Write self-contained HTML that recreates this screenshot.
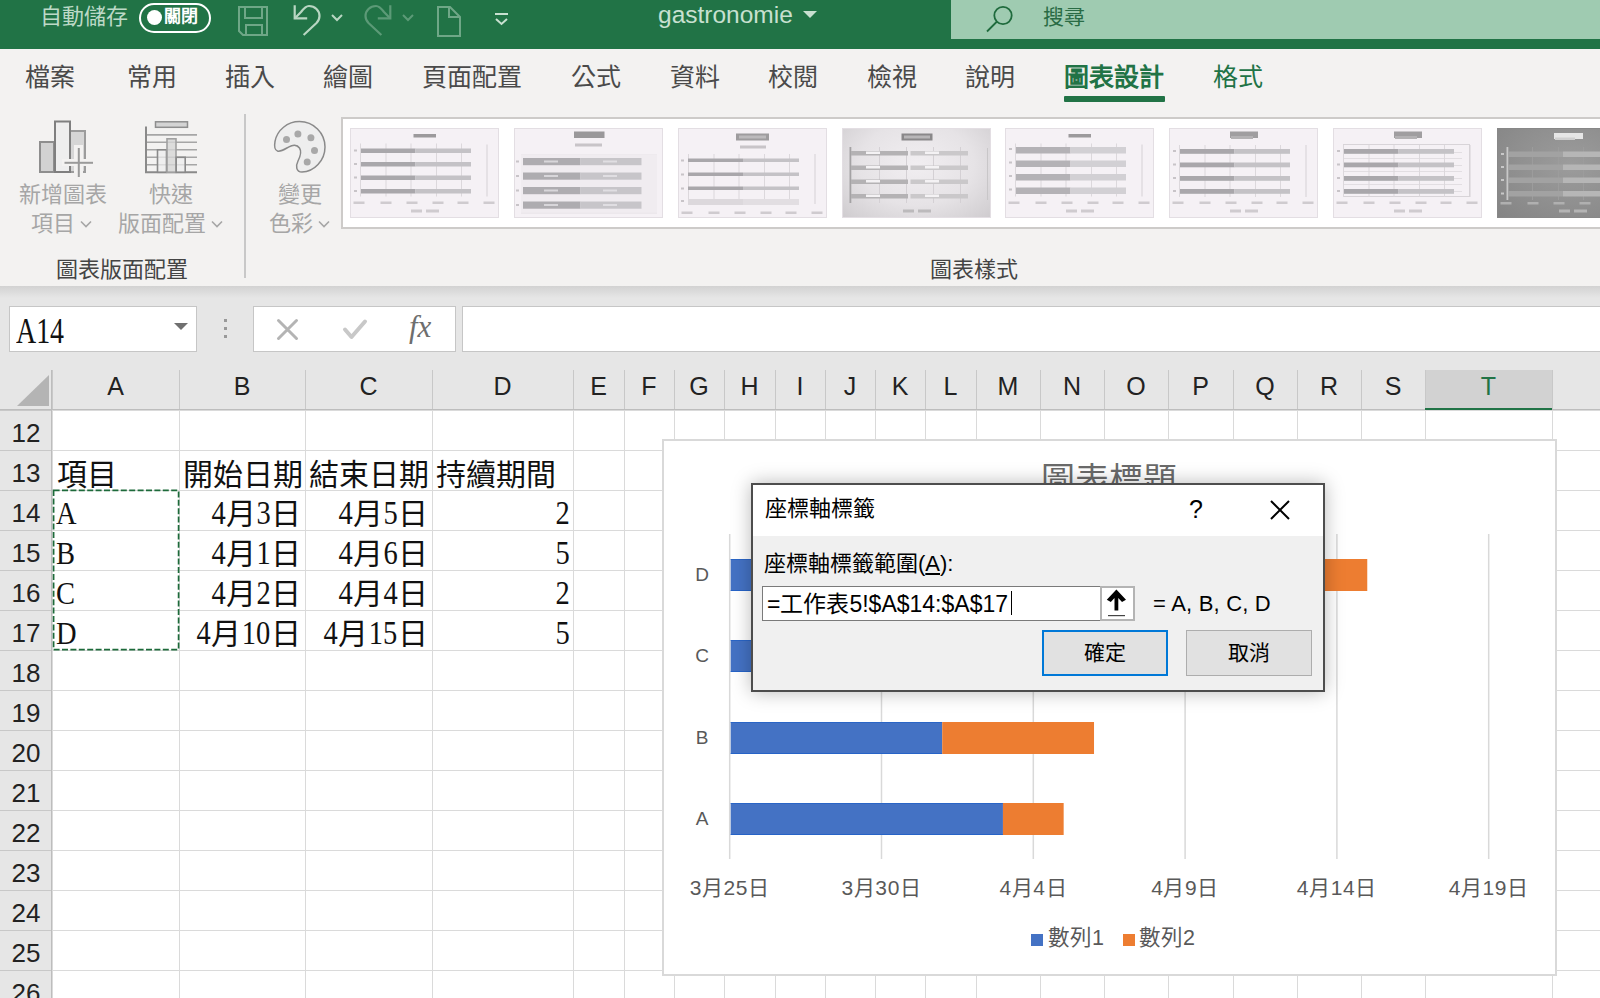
<!DOCTYPE html>
<html lang="zh-TW">
<head>
<meta charset="utf-8">
<style>
*{box-sizing:border-box;margin:0;padding:0}
html,body{width:1600px;height:998px;overflow:hidden;background:#fff;font-family:"Liberation Sans",sans-serif}
.a{position:absolute;white-space:nowrap}
#title{position:absolute;left:0;top:0;width:1600px;height:49px;background:#217346}
#search{position:absolute;left:951px;top:0;width:649px;height:39px;background:#9fcbb1}
#ribbon{position:absolute;left:0;top:49px;width:1600px;height:237px;background:#f3f2f1}
#shadow{position:absolute;left:0;top:286px;width:1600px;height:12px;background:linear-gradient(#d2d2d2,#e6e6e6)}
#fbar{position:absolute;left:0;top:286px;width:1600px;height:124px;background:#e6e6e6}
.tab{position:absolute;top:62px;font-size:25px;color:#4a4a4a;line-height:30px}
.rl{position:absolute;font-size:22px;color:#a6a6a6;line-height:28px;text-align:center}
.thumb{position:absolute;top:128px;width:149px;height:90px;background:#f5f1f5;border:1px solid #ddd7dd;overflow:hidden}
.ch{position:absolute;top:366px;height:40px;font-size:25px;line-height:40px;text-align:center;color:#222}
.rh{position:absolute;left:0;width:52px;height:40px;font-size:26px;line-height:40px;text-align:center;color:#222}
.cell{position:absolute;height:40px;font-family:"Liberation Serif",serif;font-size:30px;line-height:40px;color:#111}
.dg{display:inline-block;transform:scale(0.95,1.14);transform-origin:50% 75%}
.lt{display:inline-block;transform:scale(0.95,1.04);transform-origin:0 75%}
.r{text-align:right}
</style>
</head>
<body>
<div id="title"></div>
<div id="search"></div>
<div id="ribbon"></div>
<div id="fbar"></div>
<div id="shadow"></div>

<div class="a" style="left:40px;top:2px;font-size:22px;line-height:30px;color:#bcd9c6">自動儲存</div>
<div class="a" style="left:139px;top:3px;width:72px;height:30px;border:2px solid #fff;border-radius:15px"></div>
<div class="a" style="left:147px;top:10px;width:15px;height:15px;border-radius:50%;background:#fff"></div>
<div class="a" style="left:164px;top:5px;font-size:17px;line-height:24px;color:#fff;font-weight:bold">關閉</div>
<svg class="a" style="left:0;top:0" width="951" height="49" viewBox="0 0 951 49">
<g fill="none" stroke="#6fa787" stroke-width="2">
<path d="M239 7 H267 V35 H243 L239 31 Z"/>
<path d="M245 7 V18 H262 V7"/>
<path d="M246 35 V25 H262 V35"/>
</g>
<g fill="none" stroke="#b8d6c2" stroke-width="2.2">
<path d="M294.7 5.3 V18.4 H307.2"/>
<path d="M294.7 18.4 L301 12 C304 8 306 6 309 6 C315 6 319.5 10.5 319.5 16 C319.5 19 318.5 21 316.5 23 L303.6 35"/>
<path d="M332 15 L337 20 L342 15" stroke-width="2"/>
</g>
<g fill="none" stroke="#5c9a77" stroke-width="2.2">
<path d="M390.3 5.3 V18.4 H377.8"/>
<path d="M390.3 18.4 L384 12 C381 8 379 6 376 6 C370 6 365.5 10.5 365.5 16 C365.5 19 366.5 21 368.5 23 L381.4 35"/>
<path d="M403 15 L408 20 L413 15" stroke-width="2"/>
</g>
<g fill="none" stroke="#6fa787" stroke-width="2">
<path d="M438 7 H450 L460 17 V36 H438 Z"/>
<path d="M449 7 V17 H460"/>
</g>
<g fill="none" stroke="#c8e0d0" stroke-width="2">
<path d="M495 14 H508"/>
<path d="M496 19 L501.5 24 L507 19"/>
</g>
</svg>
<div class="a" style="left:658px;top:0px;font-size:24.5px;line-height:30px;color:#c8e0d0">gastronomie</div>
<svg class="a" style="left:803px;top:11px" width="14" height="8"><path d="M0 0 H14 L7 7 Z" fill="#c8e0d0"/></svg>
<svg class="a" style="left:984px;top:3px" width="32" height="32"><g fill="none" stroke="#1f6b3d" stroke-width="1.8"><circle cx="19" cy="12.5" r="8.7"/><path d="M13 18.5 L3 28.5"/></g></svg>
<div class="a" style="left:1043px;top:3px;font-size:21px;line-height:28px;color:#2a6b45">搜尋</div>
<div class="tab" style="left:25px">檔案</div>
<div class="tab" style="left:127px">常用</div>
<div class="tab" style="left:225px">插入</div>
<div class="tab" style="left:323px">繪圖</div>
<div class="tab" style="left:422px">頁面配置</div>
<div class="tab" style="left:571px">公式</div>
<div class="tab" style="left:670px">資料</div>
<div class="tab" style="left:768px">校閱</div>
<div class="tab" style="left:867px">檢視</div>
<div class="tab" style="left:965px">說明</div>
<div class="tab" style="left:1064px;color:#217346;font-weight:bold">圖表設計</div>
<div class="a" style="left:1064px;top:96px;width:101px;height:6px;background:#217346;border-radius:1px"></div>
<div class="tab" style="left:1213px;color:#217346">格式</div>
<svg class="a" style="left:0;top:110px" width="340" height="176" viewBox="0 110 340 176">
<rect x="40" y="142" width="14" height="30" fill="#d2d2d2" stroke="#8e8e8e" stroke-width="2"/>
<rect x="70" y="131" width="15" height="41" fill="#d6d6d6" stroke="#9c9c9c" stroke-width="2"/>
<rect x="55" y="121.5" width="15" height="50.5" fill="#eeeeee" stroke="#7f7f7f" stroke-width="2"/>
<rect x="62" y="159" width="32" height="7" fill="#f3f2f1"/>
<rect x="74" y="145" width="9" height="33" fill="#f3f2f1"/>
<g stroke="#9a9a9a" stroke-width="2">
<path d="M64.5 162.8 H93"/><path d="M78.8 148 V177"/>
</g>
<rect x="155.5" y="121.8" width="32" height="5.5" fill="#d4d4d4" stroke="#8e8e8e" stroke-width="1.5"/>
<g stroke="#a6a6a6" stroke-width="1.6" fill="none">
<path d="M147 134.9 H197 M147 142.3 H197 M147 149.8 H197 M147 157.3 H197 M147 164.8 H197"/>
</g>
<path d="M146 126.5 V172.3 H197" stroke="#8a8a8a" stroke-width="2" fill="none"/>
<rect x="157.5" y="149.8" width="9" height="22.5" fill="#eeeeee" fill-opacity="0.75" stroke="#8a8a8a" stroke-width="1.6"/>
<rect x="167" y="138.8" width="9" height="33.5" fill="#d6d6d6" fill-opacity="0.8" stroke="#a0a0a0" stroke-width="1.6"/>
<rect x="176.2" y="157.3" width="9" height="15" fill="#eeeeee" fill-opacity="0.75" stroke="#8a8a8a" stroke-width="1.6"/>
<path d="M299.5 121.6 C313.5 121.6 325 133 325 147 C325 160.5 314 172 302 172 C296 172 295.5 166 298 161 C300.5 156 301.5 151 299.5 148 C297 144.5 292.5 144.8 289 146.8 C285 149 281 152 277.5 151 C274.5 150 274.2 146 275 141.5 C277 130 287.5 121.6 299.5 121.6 Z" fill="#eeeeee" stroke="#8a8a8a" stroke-width="1.5"/>
<g fill="#a8a8a8">
<circle cx="286.5" cy="139.4" r="3.5"/><circle cx="297.9" cy="133.9" r="3.5"/><circle cx="310.9" cy="137.8" r="3.5"/><circle cx="314.5" cy="150.5" r="3.5"/><circle cx="307.2" cy="161.9" r="3.5"/>
</g>
<rect x="244" y="114" width="2" height="164" fill="#c8c8c8"/>
</svg>
<div class="rl" style="left:13px;top:181px;width:100px">新增圖表</div>
<div class="rl" style="left:11px;top:210px;width:100px">項目<svg width="12" height="8" style="vertical-align:3px;margin-left:5px"><path d="M1 1.5 L6 6.5 L11 1.5" fill="none" stroke="#a6a6a6" stroke-width="1.6"/></svg></div>
<div class="rl" style="left:121px;top:181px;width:100px">快速</div>
<div class="rl" style="left:113px;top:210px;width:115px">版面配置<svg width="12" height="8" style="vertical-align:3px;margin-left:5px"><path d="M1 1.5 L6 6.5 L11 1.5" fill="none" stroke="#a6a6a6" stroke-width="1.6"/></svg></div>
<div class="rl" style="left:250px;top:181px;width:100px">變更</div>
<div class="rl" style="left:249px;top:210px;width:100px">色彩<svg width="12" height="8" style="vertical-align:3px;margin-left:5px"><path d="M1 1.5 L6 6.5 L11 1.5" fill="none" stroke="#a6a6a6" stroke-width="1.6"/></svg></div>
<div class="a" style="left:56px;top:257px;font-size:22px;line-height:26px;color:#444">圖表版面配置</div>
<div class="a" style="left:930px;top:257px;font-size:22px;line-height:26px;color:#444">圖表樣式</div>
<div class="a" style="left:341px;top:117px;width:1270px;height:112px;background:#fff;border:2px solid #cdcbc9"></div>
<div class="thumb" style="left:350px;background:#f5f1f5;border-color:#e3dee3"><svg width="149" height="90" viewBox="0 0 149 90" style="position:absolute;left:-1px;top:-1px"><rect x="63.5" y="6" width="22.5" height="3.5" fill="#9c9a9c"/><rect x="10" y="15.5" width="1" height="53" fill="#dcd8dc"/><rect x="35.5" y="15.5" width="1" height="53" fill="#dcd8dc"/><rect x="60.5" y="15.5" width="1" height="53" fill="#dcd8dc"/><rect x="86" y="15.5" width="1" height="53" fill="#dcd8dc"/><rect x="111" y="15.5" width="1" height="53" fill="#dcd8dc"/><rect x="136.5" y="16.5" width="1" height="52" fill="#d6d2d6"/><rect x="11" y="20.5" width="54.5" height="4.5" fill="#a9a7ab"/><rect x="65.5" y="20.5" width="55.5" height="4.5" fill="#c4c2c6"/><rect x="4" y="21.5" width="3" height="2" fill="#c8c4c8"/><rect x="11" y="34" width="54.5" height="4.5" fill="#a9a7ab"/><rect x="65.5" y="34" width="55.5" height="4.5" fill="#c4c2c6"/><rect x="4" y="35" width="3" height="2" fill="#c8c4c8"/><rect x="11" y="47.5" width="54.5" height="4.5" fill="#a9a7ab"/><rect x="65.5" y="47.5" width="55.5" height="4.5" fill="#c4c2c6"/><rect x="4" y="48.5" width="3" height="2" fill="#c8c4c8"/><rect x="11" y="61" width="54.5" height="4.5" fill="#a9a7ab"/><rect x="65.5" y="61" width="55.5" height="4.5" fill="#c4c2c6"/><rect x="4" y="62" width="3" height="2" fill="#c8c4c8"/><rect x="3.5" y="73.5" width="11" height="2.5" fill="#cfcbcf"/><rect x="30.5" y="73.5" width="11" height="2.5" fill="#cfcbcf"/><rect x="56.5" y="73.5" width="11" height="2.5" fill="#cfcbcf"/><rect x="82.5" y="73.5" width="11" height="2.5" fill="#cfcbcf"/><rect x="107.5" y="73.5" width="11" height="2.5" fill="#cfcbcf"/><rect x="133.5" y="73.5" width="11" height="2.5" fill="#cfcbcf"/><rect x="61" y="81.5" width="11" height="3" fill="#cfcbcf"/><rect x="76" y="81.5" width="13" height="3" fill="#cfcbcf"/></svg></div>
<div class="thumb" style="left:514px;background:#f5f1f5;border-color:#e3dee3"><svg width="149" height="90" viewBox="0 0 149 90" style="position:absolute;left:-1px;top:-1px"><rect x="60" y="3.5" width="30.5" height="6.5" fill="#9a989a"/><rect x="61" y="15.5" width="27" height="3" fill="#c8c4c8"/><rect x="7" y="26.5" width="136" height="1" fill="#e4e0e4"/><rect x="7" y="40.5" width="136" height="1" fill="#e4e0e4"/><rect x="7" y="55" width="136" height="1" fill="#e4e0e4"/><rect x="7" y="70" width="136" height="1" fill="#e4e0e4"/><rect x="7" y="84.5" width="136" height="1" fill="#e4e0e4"/><rect x="7" y="26.5" width="136" height="58" fill="#f0ecf0"/><rect x="9" y="30" width="57.5" height="7.2" fill="#aeacb0"/><rect x="66.5" y="30" width="61" height="7.2" fill="#c7c5c9"/><rect x="30" y="32.5" width="14" height="2" fill="#d8d6da"/><rect x="89" y="32.5" width="14" height="2" fill="#e0dee2"/><rect x="2" y="32.5" width="3" height="2" fill="#c8c4c8"/><rect x="9" y="44.5" width="57.5" height="7.2" fill="#aeacb0"/><rect x="66.5" y="44.5" width="61" height="7.2" fill="#c7c5c9"/><rect x="30" y="47.0" width="14" height="2" fill="#d8d6da"/><rect x="89" y="47.0" width="14" height="2" fill="#e0dee2"/><rect x="2" y="47.0" width="3" height="2" fill="#c8c4c8"/><rect x="9" y="59" width="57.5" height="7.2" fill="#aeacb0"/><rect x="66.5" y="59" width="61" height="7.2" fill="#c7c5c9"/><rect x="30" y="61.5" width="14" height="2" fill="#d8d6da"/><rect x="89" y="61.5" width="14" height="2" fill="#e0dee2"/><rect x="2" y="61.5" width="3" height="2" fill="#c8c4c8"/><rect x="9" y="73.5" width="57.5" height="7.2" fill="#aeacb0"/><rect x="66.5" y="73.5" width="61" height="7.2" fill="#c7c5c9"/><rect x="30" y="76.0" width="14" height="2" fill="#d8d6da"/><rect x="89" y="76.0" width="14" height="2" fill="#e0dee2"/><rect x="2" y="76.0" width="3" height="2" fill="#c8c4c8"/></svg></div>
<div class="thumb" style="left:678px;background:#f5f1f5;border-color:#e3dee3"><svg width="149" height="90" viewBox="0 0 149 90" style="position:absolute;left:-1px;top:-1px"><rect x="58" y="5.5" width="33" height="7" fill="#9e9c9e"/><rect x="61" y="7.5" width="27" height="3" fill="#bcbabc"/><rect x="62" y="17.5" width="26" height="3" fill="#c8c4c8"/><rect x="10" y="26" width="1" height="50" fill="#dcd8dc"/><rect x="35.5" y="26" width="1" height="50" fill="#dcd8dc"/><rect x="60.5" y="26" width="1" height="50" fill="#dcd8dc"/><rect x="86" y="26" width="1" height="50" fill="#dcd8dc"/><rect x="111" y="26" width="1" height="50" fill="#dcd8dc"/><rect x="136.5" y="26" width="1" height="50" fill="#d6d2d6"/><rect x="10" y="30.5" width="55" height="3.5" fill="#a9a7ab"/><rect x="65" y="30.5" width="56" height="3.5" fill="#c4c2c6"/><rect x="3" y="31.5" width="3" height="2" fill="#c8c4c8"/><rect x="10" y="44.5" width="55" height="3.5" fill="#a9a7ab"/><rect x="65" y="44.5" width="56" height="3.5" fill="#c4c2c6"/><rect x="3" y="45.5" width="3" height="2" fill="#c8c4c8"/><rect x="10" y="58.5" width="55" height="3.5" fill="#a9a7ab"/><rect x="65" y="58.5" width="56" height="3.5" fill="#c4c2c6"/><rect x="3" y="59.5" width="3" height="2" fill="#c8c4c8"/><rect x="10" y="71" width="55" height="6" fill="#dcd8dc"/><rect x="65" y="71" width="56" height="6" fill="#e2dee2"/><rect x="3" y="72" width="3" height="2" fill="#c8c4c8"/><rect x="3.5" y="83.5" width="11" height="2.5" fill="#cfcbcf"/><rect x="30.5" y="83.5" width="11" height="2.5" fill="#cfcbcf"/><rect x="56.5" y="83.5" width="11" height="2.5" fill="#cfcbcf"/><rect x="82.5" y="83.5" width="11" height="2.5" fill="#cfcbcf"/><rect x="107.5" y="83.5" width="11" height="2.5" fill="#cfcbcf"/><rect x="133.5" y="83.5" width="11" height="2.5" fill="#cfcbcf"/></svg></div>
<div class="thumb" style="left:842px;background:radial-gradient(ellipse at 50% 40%,#f1eef1 0%,#e6e3e6 55%,#cfcccf 100%);border-color:#e3dee3"><svg width="149" height="90" viewBox="0 0 149 90" style="position:absolute;left:-1px;top:-1px"><rect x="59.5" y="5.5" width="31" height="7" fill="#8a888a"/><rect x="62" y="7.5" width="26" height="3" fill="#b8b6b8"/><rect x="7.5" y="19" width="1.8" height="56" fill="#a4a2a4"/><rect x="37" y="19" width="1" height="56" fill="#d4d0d4"/><rect x="64" y="19" width="1" height="56" fill="#d4d0d4"/><rect x="91" y="19" width="1" height="56" fill="#d4d0d4"/><rect x="118" y="19" width="1" height="56" fill="#d4d0d4"/><rect x="145" y="20" width="1" height="52" fill="#c8c6c8"/><rect x="9" y="23" width="57" height="4.5" fill="#b4b2b4"/><rect x="68.5" y="23" width="57.5" height="4.5" fill="#cac8ca"/><rect x="24" y="23.5" width="14" height="2.5" fill="#f4f2f4"/><rect x="83" y="23.5" width="14" height="2.5" fill="#f4f2f4"/><rect x="9" y="37.5" width="57" height="4.5" fill="#b4b2b4"/><rect x="68.5" y="37.5" width="57.5" height="4.5" fill="#cac8ca"/><rect x="24" y="38.0" width="14" height="2.5" fill="#f4f2f4"/><rect x="83" y="38.0" width="14" height="2.5" fill="#f4f2f4"/><rect x="9" y="51.5" width="57" height="4.5" fill="#b4b2b4"/><rect x="68.5" y="51.5" width="57.5" height="4.5" fill="#cac8ca"/><rect x="24" y="52.0" width="14" height="2.5" fill="#f4f2f4"/><rect x="83" y="52.0" width="14" height="2.5" fill="#f4f2f4"/><rect x="9" y="66" width="57" height="4.5" fill="#b4b2b4"/><rect x="68.5" y="66" width="57.5" height="4.5" fill="#cac8ca"/><rect x="24" y="66.5" width="14" height="2.5" fill="#f4f2f4"/><rect x="83" y="66.5" width="14" height="2.5" fill="#f4f2f4"/><rect x="61" y="81.5" width="11" height="3" fill="#bcbabc"/><rect x="76" y="81.5" width="13" height="3" fill="#bcbabc"/></svg></div>
<div class="thumb" style="left:1005px;background:#f5f1f5;border-color:#e3dee3"><svg width="149" height="90" viewBox="0 0 149 90" style="position:absolute;left:-1px;top:-1px"><rect x="63.5" y="6" width="22.5" height="3.5" fill="#9c9a9c"/><rect x="10" y="15.5" width="1" height="53" fill="#dcd8dc"/><rect x="35.5" y="15.5" width="1" height="53" fill="#dcd8dc"/><rect x="60.5" y="15.5" width="1" height="53" fill="#dcd8dc"/><rect x="86" y="15.5" width="1" height="53" fill="#dcd8dc"/><rect x="111" y="15.5" width="1" height="53" fill="#dcd8dc"/><rect x="136.5" y="16.5" width="1" height="52" fill="#d6d2d6"/><rect x="11" y="19" width="54.5" height="6.5" fill="#b4b2b6"/><rect x="65.5" y="19" width="55.5" height="6.5" fill="#d2d0d4"/><rect x="4" y="20" width="3" height="2" fill="#c8c4c8"/><rect x="11" y="32.5" width="54.5" height="6.5" fill="#b4b2b6"/><rect x="65.5" y="32.5" width="55.5" height="6.5" fill="#d2d0d4"/><rect x="4" y="33.5" width="3" height="2" fill="#c8c4c8"/><rect x="11" y="46" width="54.5" height="6.5" fill="#b4b2b6"/><rect x="65.5" y="46" width="55.5" height="6.5" fill="#d2d0d4"/><rect x="4" y="47" width="3" height="2" fill="#c8c4c8"/><rect x="11" y="59.5" width="54.5" height="6.5" fill="#b4b2b6"/><rect x="65.5" y="59.5" width="55.5" height="6.5" fill="#d2d0d4"/><rect x="4" y="60.5" width="3" height="2" fill="#c8c4c8"/><rect x="3.5" y="73.5" width="11" height="2.5" fill="#cfcbcf"/><rect x="30.5" y="73.5" width="11" height="2.5" fill="#cfcbcf"/><rect x="56.5" y="73.5" width="11" height="2.5" fill="#cfcbcf"/><rect x="82.5" y="73.5" width="11" height="2.5" fill="#cfcbcf"/><rect x="107.5" y="73.5" width="11" height="2.5" fill="#cfcbcf"/><rect x="133.5" y="73.5" width="11" height="2.5" fill="#cfcbcf"/><rect x="61" y="81.5" width="11" height="3" fill="#cfcbcf"/><rect x="76" y="81.5" width="13" height="3" fill="#cfcbcf"/></svg></div>
<div class="thumb" style="left:1169px;background:#f5f1f5;border-color:#e3dee3"><svg width="149" height="90" viewBox="0 0 149 90" style="position:absolute;left:-1px;top:-1px"><rect x="61" y="3.5" width="28" height="6.5" fill="#a09ea0"/><rect x="62" y="8" width="22" height="3" fill="#b4b2b4"/><rect x="10" y="17" width="1" height="52" fill="#dcd8dc"/><rect x="35.5" y="17" width="1" height="52" fill="#dcd8dc"/><rect x="60.5" y="17" width="1" height="52" fill="#dcd8dc"/><rect x="86" y="17" width="1" height="52" fill="#dcd8dc"/><rect x="111" y="17" width="1" height="52" fill="#dcd8dc"/><rect x="136.5" y="17" width="1" height="52" fill="#d6d2d6"/><rect x="11" y="21" width="54.5" height="4.8" fill="#a9a7ab"/><rect x="65.5" y="21" width="55.5" height="4.8" fill="#c4c2c6"/><rect x="4" y="22" width="3" height="2" fill="#c8c4c8"/><rect x="11" y="34.5" width="54.5" height="4.8" fill="#a9a7ab"/><rect x="65.5" y="34.5" width="55.5" height="4.8" fill="#c4c2c6"/><rect x="4" y="35.5" width="3" height="2" fill="#c8c4c8"/><rect x="11" y="48" width="54.5" height="4.8" fill="#a9a7ab"/><rect x="65.5" y="48" width="55.5" height="4.8" fill="#c4c2c6"/><rect x="4" y="49" width="3" height="2" fill="#c8c4c8"/><rect x="11" y="61" width="54.5" height="4.8" fill="#a9a7ab"/><rect x="65.5" y="61" width="55.5" height="4.8" fill="#c4c2c6"/><rect x="4" y="62" width="3" height="2" fill="#c8c4c8"/><rect x="3.5" y="73.5" width="11" height="2.5" fill="#cfcbcf"/><rect x="30.5" y="73.5" width="11" height="2.5" fill="#cfcbcf"/><rect x="56.5" y="73.5" width="11" height="2.5" fill="#cfcbcf"/><rect x="82.5" y="73.5" width="11" height="2.5" fill="#cfcbcf"/><rect x="107.5" y="73.5" width="11" height="2.5" fill="#cfcbcf"/><rect x="133.5" y="73.5" width="11" height="2.5" fill="#cfcbcf"/><rect x="61" y="81.5" width="11" height="3" fill="#cfcbcf"/><rect x="76" y="81.5" width="13" height="3" fill="#cfcbcf"/></svg></div>
<div class="thumb" style="left:1333px;background:#f5f1f5;border-color:#e3dee3"><svg width="149" height="90" viewBox="0 0 149 90" style="position:absolute;left:-1px;top:-1px"><rect x="61" y="3.5" width="28" height="6.5" fill="#a09ea0"/><rect x="62" y="8" width="22" height="3" fill="#b4b2b4"/><rect x="10.5" y="16.5" width="126" height="52" fill="none" stroke="#d8d4d8" stroke-width="1"/><rect x="11" y="24" width="118" height="1" fill="#e2dee2"/><rect x="11" y="30" width="118" height="1" fill="#e2dee2"/><rect x="11" y="37" width="118" height="1" fill="#e2dee2"/><rect x="11" y="43" width="118" height="1" fill="#e2dee2"/><rect x="11" y="50" width="118" height="1" fill="#e2dee2"/><rect x="11" y="56" width="118" height="1" fill="#e2dee2"/><rect x="11" y="63" width="118" height="1" fill="#e2dee2"/><rect x="10" y="17" width="1" height="52" fill="#dcd8dc"/><rect x="35.5" y="17" width="1" height="52" fill="#dcd8dc"/><rect x="60.5" y="17" width="1" height="52" fill="#dcd8dc"/><rect x="86" y="17" width="1" height="52" fill="#dcd8dc"/><rect x="111" y="17" width="1" height="52" fill="#dcd8dc"/><rect x="136.5" y="17" width="1" height="52" fill="#d6d2d6"/><rect x="11" y="21" width="54.5" height="4.8" fill="#a9a7ab"/><rect x="65.5" y="21" width="55.5" height="4.8" fill="#c4c2c6"/><rect x="4" y="22" width="3" height="2" fill="#c8c4c8"/><rect x="11" y="34.5" width="54.5" height="4.8" fill="#a9a7ab"/><rect x="65.5" y="34.5" width="55.5" height="4.8" fill="#c4c2c6"/><rect x="4" y="35.5" width="3" height="2" fill="#c8c4c8"/><rect x="11" y="48" width="54.5" height="4.8" fill="#a9a7ab"/><rect x="65.5" y="48" width="55.5" height="4.8" fill="#c4c2c6"/><rect x="4" y="49" width="3" height="2" fill="#c8c4c8"/><rect x="11" y="61" width="54.5" height="4.8" fill="#a9a7ab"/><rect x="65.5" y="61" width="55.5" height="4.8" fill="#c4c2c6"/><rect x="4" y="62" width="3" height="2" fill="#c8c4c8"/><rect x="3.5" y="73.5" width="11" height="2.5" fill="#cfcbcf"/><rect x="30.5" y="73.5" width="11" height="2.5" fill="#cfcbcf"/><rect x="56.5" y="73.5" width="11" height="2.5" fill="#cfcbcf"/><rect x="82.5" y="73.5" width="11" height="2.5" fill="#cfcbcf"/><rect x="107.5" y="73.5" width="11" height="2.5" fill="#cfcbcf"/><rect x="133.5" y="73.5" width="11" height="2.5" fill="#cfcbcf"/><rect x="61" y="81.5" width="11" height="3" fill="#cfcbcf"/><rect x="76" y="81.5" width="13" height="3" fill="#cfcbcf"/></svg></div>
<div class="thumb" style="left:1497px;background:radial-gradient(ellipse at 50% 40%,#9c9c9c 0%,#8e8e8e 60%,#848484 100%);border-color:#888"><svg width="149" height="90" viewBox="0 0 149 90" style="position:absolute;left:-1px;top:-1px"><rect x="57" y="5" width="29" height="6" fill="#e6e6e6"/><rect x="58" y="9.5" width="20" height="2.5" fill="#cfcfcf"/><rect x="9.5" y="19" width="1.8" height="53" fill="#c8c8c8"/><rect x="35" y="19" width="1" height="53" fill="#9c9c9c"/><rect x="61" y="19" width="1" height="53" fill="#9c9c9c"/><rect x="86" y="19" width="1" height="53" fill="#9c9c9c"/><rect x="111" y="19" width="1" height="53" fill="#9c9c9c"/><rect x="11" y="23.5" width="55" height="5.5" fill="#a2a2a2"/><rect x="66" y="23.5" width="80" height="5.5" fill="#b6b6b6"/><rect x="4" y="25.0" width="3" height="2" fill="#c8c8c8"/><rect x="11" y="36.5" width="55" height="5.5" fill="#a2a2a2"/><rect x="66" y="36.5" width="80" height="5.5" fill="#b6b6b6"/><rect x="4" y="38.0" width="3" height="2" fill="#c8c8c8"/><rect x="11" y="49.5" width="55" height="5.5" fill="#a2a2a2"/><rect x="66" y="49.5" width="80" height="5.5" fill="#b6b6b6"/><rect x="4" y="51.0" width="3" height="2" fill="#c8c8c8"/><rect x="11" y="63" width="55" height="5.5" fill="#a2a2a2"/><rect x="66" y="63" width="80" height="5.5" fill="#b6b6b6"/><rect x="4" y="64.5" width="3" height="2" fill="#c8c8c8"/><rect x="3.5" y="74" width="11" height="2.5" fill="#b0b0b0"/><rect x="30.5" y="74" width="11" height="2.5" fill="#b0b0b0"/><rect x="56.5" y="74" width="11" height="2.5" fill="#b0b0b0"/><rect x="82.5" y="74" width="11" height="2.5" fill="#b0b0b0"/><rect x="107.5" y="74" width="11" height="2.5" fill="#b0b0b0"/><rect x="133.5" y="74" width="11" height="2.5" fill="#b0b0b0"/><rect x="62" y="81.5" width="11" height="3" fill="#b4b4b4"/><rect x="77" y="81.5" width="13" height="3" fill="#b4b4b4"/></svg></div>
<div class="a" style="left:9px;top:306px;width:188px;height:46px;background:#fff;border:1px solid #c6c6c6"></div>
<div class="a" style="left:16px;top:315px;font-family:'Liberation Serif',serif;font-size:30px;line-height:36px;color:#111;transform:scale(0.93,1.16);transform-origin:0 80%">A14</div>
<svg class="a" style="left:174px;top:323px" width="14" height="8"><path d="M0 0 H14 L7 7 Z" fill="#707070"/></svg>
<div class="a" style="left:224px;top:319px;width:3px;height:3px;background:#999"></div><div class="a" style="left:224px;top:327px;width:3px;height:3px;background:#999"></div><div class="a" style="left:224px;top:335px;width:3px;height:3px;background:#999"></div>
<div class="a" style="left:253px;top:306px;width:203px;height:46px;background:#fff;border:1px solid #c6c6c6"></div>
<svg class="a" style="left:276px;top:318px" width="24" height="24"><path d="M2.5 2.5 L20.5 20.5 M20.5 2.5 L2.5 20.5" stroke="#b4b4b4" stroke-width="3" stroke-linecap="round"/></svg>
<svg class="a" style="left:342px;top:318px" width="26" height="24"><path d="M3 11.5 L9.5 19 L23 3.5" fill="none" stroke="#c8c8c8" stroke-width="4" stroke-linecap="round" stroke-linejoin="round"/></svg>
<div class="a" style="left:409px;top:309px;font-family:'Liberation Serif',serif;font-style:italic;font-size:31px;line-height:36px;color:#6e6e6e">fx</div>
<div class="a" style="left:462px;top:306px;width:1150px;height:46px;background:#fff;border:1px solid #c6c6c6"></div>
<svg class="a" style="left:0;top:370px" width="1600" height="628" viewBox="0 370 1600 628"><rect x="0" y="370" width="1600" height="40" fill="#e6e6e6"/><rect x="1425" y="370" width="127" height="40" fill="#d2d2d2"/><rect x="0" y="410" width="52" height="588" fill="#e6e6e6"/><path d="M17 406 L49 375 V406 Z" fill="#b4b4b4"/><rect x="52" y="410" width="1" height="588" fill="#dadada"/><rect x="52" y="370" width="1" height="40" fill="#c8c8c8"/><rect x="179" y="410" width="1" height="588" fill="#dadada"/><rect x="179" y="370" width="1" height="40" fill="#c8c8c8"/><rect x="305" y="410" width="1" height="588" fill="#dadada"/><rect x="305" y="370" width="1" height="40" fill="#c8c8c8"/><rect x="432" y="410" width="1" height="588" fill="#dadada"/><rect x="432" y="370" width="1" height="40" fill="#c8c8c8"/><rect x="573" y="410" width="1" height="588" fill="#dadada"/><rect x="573" y="370" width="1" height="40" fill="#c8c8c8"/><rect x="624" y="410" width="1" height="588" fill="#dadada"/><rect x="624" y="370" width="1" height="40" fill="#c8c8c8"/><rect x="674" y="410" width="1" height="588" fill="#dadada"/><rect x="674" y="370" width="1" height="40" fill="#c8c8c8"/><rect x="724" y="410" width="1" height="588" fill="#dadada"/><rect x="724" y="370" width="1" height="40" fill="#c8c8c8"/><rect x="775" y="410" width="1" height="588" fill="#dadada"/><rect x="775" y="370" width="1" height="40" fill="#c8c8c8"/><rect x="825" y="410" width="1" height="588" fill="#dadada"/><rect x="825" y="370" width="1" height="40" fill="#c8c8c8"/><rect x="875" y="410" width="1" height="588" fill="#dadada"/><rect x="875" y="370" width="1" height="40" fill="#c8c8c8"/><rect x="925" y="410" width="1" height="588" fill="#dadada"/><rect x="925" y="370" width="1" height="40" fill="#c8c8c8"/><rect x="976" y="410" width="1" height="588" fill="#dadada"/><rect x="976" y="370" width="1" height="40" fill="#c8c8c8"/><rect x="1040" y="410" width="1" height="588" fill="#dadada"/><rect x="1040" y="370" width="1" height="40" fill="#c8c8c8"/><rect x="1104" y="410" width="1" height="588" fill="#dadada"/><rect x="1104" y="370" width="1" height="40" fill="#c8c8c8"/><rect x="1168" y="410" width="1" height="588" fill="#dadada"/><rect x="1168" y="370" width="1" height="40" fill="#c8c8c8"/><rect x="1233" y="410" width="1" height="588" fill="#dadada"/><rect x="1233" y="370" width="1" height="40" fill="#c8c8c8"/><rect x="1297" y="410" width="1" height="588" fill="#dadada"/><rect x="1297" y="370" width="1" height="40" fill="#c8c8c8"/><rect x="1361" y="410" width="1" height="588" fill="#dadada"/><rect x="1361" y="370" width="1" height="40" fill="#c8c8c8"/><rect x="1425" y="410" width="1" height="588" fill="#dadada"/><rect x="1425" y="370" width="1" height="40" fill="#c8c8c8"/><rect x="1552" y="410" width="1" height="588" fill="#dadada"/><rect x="1552" y="370" width="1" height="40" fill="#c8c8c8"/><rect x="1552" y="410" width="1" height="588" fill="#dadada"/><rect x="52" y="410" width="1548" height="1" fill="#dadada"/><rect x="0" y="410" width="52" height="1" fill="#c8c8c8"/><rect x="52" y="450" width="1548" height="1" fill="#dadada"/><rect x="0" y="450" width="52" height="1" fill="#c8c8c8"/><rect x="52" y="490" width="1548" height="1" fill="#dadada"/><rect x="0" y="490" width="52" height="1" fill="#c8c8c8"/><rect x="52" y="530" width="1548" height="1" fill="#dadada"/><rect x="0" y="530" width="52" height="1" fill="#c8c8c8"/><rect x="52" y="570" width="1548" height="1" fill="#dadada"/><rect x="0" y="570" width="52" height="1" fill="#c8c8c8"/><rect x="52" y="610" width="1548" height="1" fill="#dadada"/><rect x="0" y="610" width="52" height="1" fill="#c8c8c8"/><rect x="52" y="650" width="1548" height="1" fill="#dadada"/><rect x="0" y="650" width="52" height="1" fill="#c8c8c8"/><rect x="52" y="690" width="1548" height="1" fill="#dadada"/><rect x="0" y="690" width="52" height="1" fill="#c8c8c8"/><rect x="52" y="730" width="1548" height="1" fill="#dadada"/><rect x="0" y="730" width="52" height="1" fill="#c8c8c8"/><rect x="52" y="770" width="1548" height="1" fill="#dadada"/><rect x="0" y="770" width="52" height="1" fill="#c8c8c8"/><rect x="52" y="810" width="1548" height="1" fill="#dadada"/><rect x="0" y="810" width="52" height="1" fill="#c8c8c8"/><rect x="52" y="850" width="1548" height="1" fill="#dadada"/><rect x="0" y="850" width="52" height="1" fill="#c8c8c8"/><rect x="52" y="890" width="1548" height="1" fill="#dadada"/><rect x="0" y="890" width="52" height="1" fill="#c8c8c8"/><rect x="52" y="930" width="1548" height="1" fill="#dadada"/><rect x="0" y="930" width="52" height="1" fill="#c8c8c8"/><rect x="52" y="970" width="1548" height="1" fill="#dadada"/><rect x="0" y="970" width="52" height="1" fill="#c8c8c8"/><rect x="0" y="409" width="1600" height="1" fill="#bdbdbd"/><rect x="51" y="370" width="1" height="628" fill="#bdbdbd"/><rect x="1425" y="408" width="127" height="2" fill="#217346"/></svg>
<div class="ch" style="left:52px;width:127px;color:#222">A</div>
<div class="ch" style="left:179px;width:126px;color:#222">B</div>
<div class="ch" style="left:305px;width:127px;color:#222">C</div>
<div class="ch" style="left:432px;width:141px;color:#222">D</div>
<div class="ch" style="left:573px;width:51px;color:#222">E</div>
<div class="ch" style="left:624px;width:50px;color:#222">F</div>
<div class="ch" style="left:674px;width:50px;color:#222">G</div>
<div class="ch" style="left:724px;width:51px;color:#222">H</div>
<div class="ch" style="left:775px;width:50px;color:#222">I</div>
<div class="ch" style="left:825px;width:50px;color:#222">J</div>
<div class="ch" style="left:875px;width:50px;color:#222">K</div>
<div class="ch" style="left:925px;width:51px;color:#222">L</div>
<div class="ch" style="left:976px;width:64px;color:#222">M</div>
<div class="ch" style="left:1040px;width:64px;color:#222">N</div>
<div class="ch" style="left:1104px;width:64px;color:#222">O</div>
<div class="ch" style="left:1168px;width:65px;color:#222">P</div>
<div class="ch" style="left:1233px;width:64px;color:#222">Q</div>
<div class="ch" style="left:1297px;width:64px;color:#222">R</div>
<div class="ch" style="left:1361px;width:64px;color:#222">S</div>
<div class="ch" style="left:1425px;width:127px;color:#217346">T</div>
<div class="rh" style="top:413px">12</div>
<div class="rh" style="top:453px">13</div>
<div class="rh" style="top:493px">14</div>
<div class="rh" style="top:533px">15</div>
<div class="rh" style="top:573px">16</div>
<div class="rh" style="top:613px">17</div>
<div class="rh" style="top:653px">18</div>
<div class="rh" style="top:693px">19</div>
<div class="rh" style="top:733px">20</div>
<div class="rh" style="top:773px">21</div>
<div class="rh" style="top:813px">22</div>
<div class="rh" style="top:853px">23</div>
<div class="rh" style="top:893px">24</div>
<div class="rh" style="top:933px">25</div>
<div class="rh" style="top:973px">26</div>
<div class="cell" style="left:57px;top:455px">項目</div>
<div class="cell" style="left:183px;top:455px">開始日期</div>
<div class="cell" style="left:309px;top:455px">結束日期</div>
<div class="cell" style="left:436px;top:455px">持續期間</div>
<div class="cell" style="left:56px;top:494px"><span class="lt">A</span></div>
<div class="cell r" style="left:179px;width:122px;top:494px"><span class="dg">4</span>月<span class="dg">3</span>日</div>
<div class="cell r" style="left:305px;width:123px;top:494px"><span class="dg">4</span>月<span class="dg">5</span>日</div>
<div class="cell r" style="left:432px;width:138px;top:494px"><span class="dg">2</span></div>
<div class="cell" style="left:56px;top:534px"><span class="lt">B</span></div>
<div class="cell r" style="left:179px;width:122px;top:534px"><span class="dg">4</span>月<span class="dg">1</span>日</div>
<div class="cell r" style="left:305px;width:123px;top:534px"><span class="dg">4</span>月<span class="dg">6</span>日</div>
<div class="cell r" style="left:432px;width:138px;top:534px"><span class="dg">5</span></div>
<div class="cell" style="left:56px;top:574px"><span class="lt">C</span></div>
<div class="cell r" style="left:179px;width:122px;top:574px"><span class="dg">4</span>月<span class="dg">2</span>日</div>
<div class="cell r" style="left:305px;width:123px;top:574px"><span class="dg">4</span>月<span class="dg">4</span>日</div>
<div class="cell r" style="left:432px;width:138px;top:574px"><span class="dg">2</span></div>
<div class="cell" style="left:56px;top:614px"><span class="lt">D</span></div>
<div class="cell r" style="left:179px;width:122px;top:614px"><span class="dg">4</span>月<span class="dg">10</span>日</div>
<div class="cell r" style="left:305px;width:123px;top:614px"><span class="dg">4</span>月<span class="dg">15</span>日</div>
<div class="cell r" style="left:432px;width:138px;top:614px"><span class="dg">5</span></div>
<svg class="a" style="left:50px;top:487px" width="134" height="166"><rect x="3.6" y="3.4" width="125" height="159.2" fill="none" stroke="#1d6a3a" stroke-width="1.7" stroke-dasharray="6 2.4"/></svg>
<div class="a" style="left:662px;top:439px;width:895px;height:537px;background:#fff;border:2px solid #d9d9d9"></div>
<div class="a" style="left:1041px;top:461px;font-family:'Liberation Serif',serif;font-size:34px;line-height:40px;color:#6a6a6a">圖表標題</div>
<svg class="a" style="left:662px;top:439px" width="895" height="537" viewBox="662 439 895 537"><rect x="728.95" y="534" width="1.5" height="325" fill="#d9d9d9"/><rect x="880.75" y="534" width="1.5" height="325" fill="#d9d9d9"/><rect x="1032.55" y="534" width="1.5" height="325" fill="#d9d9d9"/><rect x="1184.35" y="534" width="1.5" height="325" fill="#d9d9d9"/><rect x="1336.15" y="534" width="1.5" height="325" fill="#d9d9d9"/><rect x="1487.95" y="534" width="1.5" height="325" fill="#d9d9d9"/><rect x="730.70" y="559" width="484.76" height="32" fill="#4472c4"/><rect x="730.70" y="559" width="484.76" height="1" fill="#1f5fc8" opacity="0.7"/><rect x="730.70" y="590" width="484.76" height="1" fill="#1f5fc8" opacity="0.8"/><rect x="1215.46" y="559" width="151.80" height="32" fill="#ed7d31"/><rect x="730.70" y="640" width="241.88" height="32" fill="#4472c4"/><rect x="730.70" y="640" width="241.88" height="1" fill="#1f5fc8" opacity="0.7"/><rect x="730.70" y="671" width="241.88" height="1" fill="#1f5fc8" opacity="0.8"/><rect x="972.58" y="640" width="60.72" height="32" fill="#ed7d31"/><rect x="730.70" y="722" width="211.52" height="32" fill="#4472c4"/><rect x="730.70" y="722" width="211.52" height="1" fill="#1f5fc8" opacity="0.7"/><rect x="730.70" y="753" width="211.52" height="1" fill="#1f5fc8" opacity="0.8"/><rect x="942.22" y="722" width="151.80" height="32" fill="#ed7d31"/><rect x="730.70" y="803" width="272.24" height="32" fill="#4472c4"/><rect x="730.70" y="803" width="272.24" height="1" fill="#1f5fc8" opacity="0.7"/><rect x="730.70" y="834" width="272.24" height="1" fill="#1f5fc8" opacity="0.8"/><rect x="1002.94" y="803" width="60.72" height="32" fill="#ed7d31"/><rect x="1031" y="934" width="12" height="12" fill="#4472c4"/><rect x="1123" y="934" width="12" height="12" fill="#ed7d31"/></svg>
<div class="a" style="left:690px;top:562px;width:24px;text-align:center;font-size:19px;line-height:26px;color:#595959">D</div>
<div class="a" style="left:690px;top:643px;width:24px;text-align:center;font-size:19px;line-height:26px;color:#595959">C</div>
<div class="a" style="left:690px;top:725px;width:24px;text-align:center;font-size:19px;line-height:26px;color:#595959">B</div>
<div class="a" style="left:690px;top:806px;width:24px;text-align:center;font-size:19px;line-height:26px;color:#595959">A</div>
<div class="a" style="left:669.7px;top:875px;width:120px;text-align:center;font-size:21px;letter-spacing:0.6px;line-height:26px;color:#595959">3月25日</div>
<div class="a" style="left:821.5px;top:875px;width:120px;text-align:center;font-size:21px;letter-spacing:0.6px;line-height:26px;color:#595959">3月30日</div>
<div class="a" style="left:973.3px;top:875px;width:120px;text-align:center;font-size:21px;letter-spacing:0.6px;line-height:26px;color:#595959">4月4日</div>
<div class="a" style="left:1125.1px;top:875px;width:120px;text-align:center;font-size:21px;letter-spacing:0.6px;line-height:26px;color:#595959">4月9日</div>
<div class="a" style="left:1276.9px;top:875px;width:120px;text-align:center;font-size:21px;letter-spacing:0.6px;line-height:26px;color:#595959">4月14日</div>
<div class="a" style="left:1428.7px;top:875px;width:120px;text-align:center;font-size:21px;letter-spacing:0.6px;line-height:26px;color:#595959">4月19日</div>
<div class="a" style="left:1048px;top:925px;font-size:21.5px;line-height:26px;color:#595959">數列1</div>
<div class="a" style="left:1139px;top:925px;font-size:21.5px;line-height:26px;color:#595959">數列2</div>
<div class="a" style="left:751px;top:483px;width:574px;height:209px;background:#f0f0f0;border:2px solid #4d4d4d;box-shadow:0 0 18px rgba(0,0,0,0.28)"></div>
<div class="a" style="left:753px;top:485px;width:570px;height:51px;background:#fff"></div>
<div class="a" style="left:765px;top:495px;font-size:22px;line-height:28px;color:#000">座標軸標籤</div>
<div class="a" style="left:1189px;top:494px;font-size:25px;line-height:30px;color:#000">?</div>
<svg class="a" style="left:1269px;top:499px" width="22" height="22"><path d="M2 2 L20 20 M20 2 L2 20" stroke="#000" stroke-width="2"/></svg>
<div class="a" style="left:764px;top:550px;font-size:22px;line-height:28px;color:#000">座標軸標籤範圍(<u>A</u>):</div>
<div class="a" style="left:762px;top:586px;width:340px;height:35px;background:#fff;border:1px solid #7a7a7a"></div>
<div class="a" style="left:767px;top:590px;font-size:23px;line-height:28px;color:#000">=工作表5!$A$14:$A$17</div>
<div class="a" style="left:1011px;top:591px;width:1px;height:24px;background:#000"></div>
<div class="a" style="left:1100px;top:586px;width:35px;height:35px;background:#fff;border:2px solid #b4b4b4"></div>
<svg class="a" style="left:1104px;top:589px" width="26" height="29"><path d="M12.4 0.5 L2.8 10.8 L6.8 13 L10.5 9 V21.5 H14.3 V9 L18 13 L22 10.8 Z" fill="#000"/><rect x="4" y="26" width="17" height="1.2" fill="#444"/></svg>
<div class="a" style="left:1153px;top:590px;font-size:22px;letter-spacing:0.2px;line-height:28px;color:#000">= A, B, C, D</div>
<div class="a" style="left:1042px;top:630px;width:126px;height:46px;background:#e1e1e1;border:2px solid #0078d7"></div>
<div class="a" style="left:1042px;top:639px;width:126px;text-align:center;font-size:21px;line-height:28px;color:#000">確定</div>
<div class="a" style="left:1186px;top:630px;width:126px;height:46px;background:#e1e1e1;border:1px solid #adadad"></div>
<div class="a" style="left:1186px;top:639px;width:126px;text-align:center;font-size:21px;line-height:28px;color:#000">取消</div>
</body></html>
